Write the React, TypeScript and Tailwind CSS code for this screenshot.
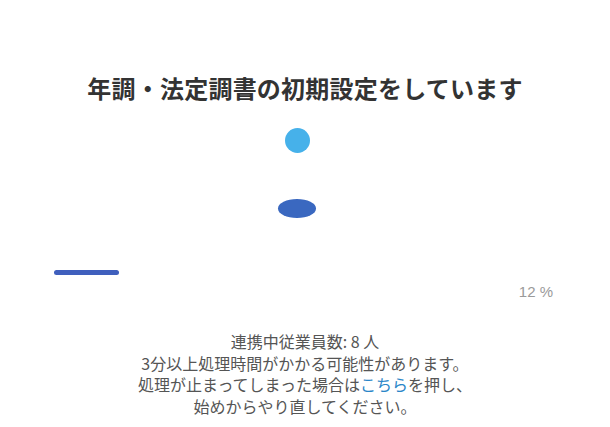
export default function App() {
  const progress = 12;
  return (
    <div
      className="flex h-[427px] w-[610px] flex-col items-center bg-white text-[#333]"
      style={{ fontFamily: '"Noto Sans CJK JP", "Noto Sans", sans-serif' }}
    >
      <h1 className="mt-[70px] text-[24px] font-bold leading-[36px] tracking-[0.01em] text-[#333]">
        年調・法定調書の初期設定をしています
      </h1>

      {/* loading dots */}
      <div className="mt-[22px] mr-[16px] flex flex-col items-center">
        <div className="h-[25px] w-[25px] rounded-full bg-[#46b1ea]" />
        <div className="mt-[46px] h-[19px] w-[38px] rounded-[50%] bg-[#3a68c0]" />
      </div>

      <div className="mt-[52px] w-full px-[54px]">
        <div className="h-[5px] w-full">
          <div className="h-full rounded-full bg-[#3f5fbd]" style={{ width: `${progress * 1.08}%` }} />
        </div>
        <div
          className="mt-[8px] pr-[3px] text-right text-[15px] leading-[18px] text-[#9a9a9a]"
          style={{ fontFamily: '"Liberation Sans", sans-serif' }}
        >
          {progress} %
        </div>
      </div>

      <div className="mt-[30px] text-center text-[16px] leading-[21.5px] text-[#555]">
        <p>連携中従業員数: 8 人</p>
        <p>3分以上処理時間がかかる可能性があります。</p>
        <p>
          処理が止まってしまった場合は<a className="text-[#2a86c8]">こちら</a>を押し、
        </p>
        <p>始めからやり直してください。</p>
      </div>
    </div>
  );
}
